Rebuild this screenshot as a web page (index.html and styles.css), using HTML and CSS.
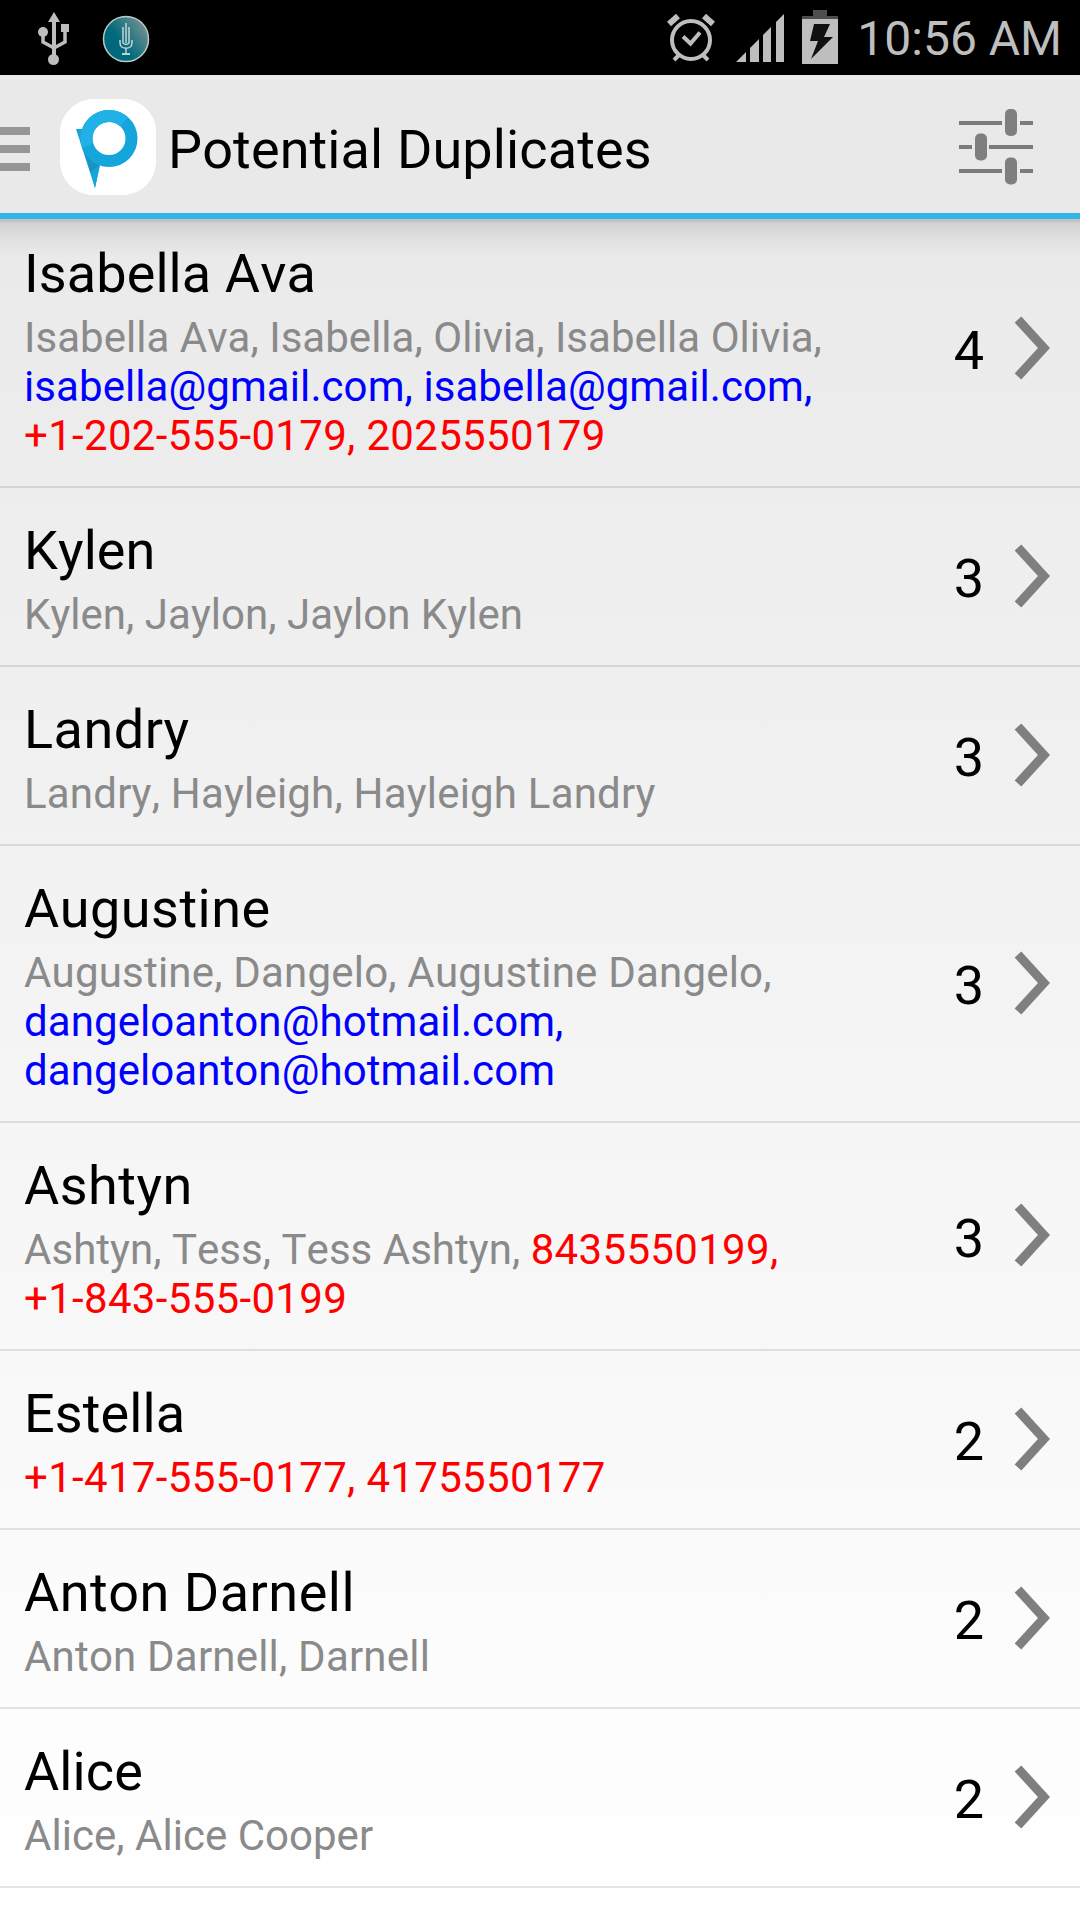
FILE: index.html
```
<!DOCTYPE html>
<html lang="en">

<head>
    <meta charset="UTF-8">
    <meta name="viewport" content="width=device-width, initial-scale=1.0">
    <title>Potential Duplicates</title>
    <link rel="stylesheet" href="styles.css">
</head>

<body>
    <div class="status-bar">
        <svg class="usb-icon" width="32" height="54" viewBox="0 0 32 54">
            <path d="M16 0l6 10h-4v33h-4V10h-4z" />
            <path class="branches" d="M5 20v10l11 6M27 18v12l-11 6" />
            <path d="M23 12h8v8h-8z" />
            <circle cx="5" cy="20" r="5" />
            <circle cx="15.500" cy="47.500" r="5.500" />
        </svg>
        <svg class="mic-icon" width="48" height="48" viewBox="0 0 48 48">
            <defs>
                <linearGradient id="micFill" x1="0.2" y1="0.7" x2="0.9" y2="0.2">
                    <stop offset="0.25" stop-color="#006a7c" />
                    <stop offset="1" stop-color="#6d8e90" />
                </linearGradient>
            </defs>
            <circle cx="24" cy="24" r="22.500" fill="url(#micFill)" stroke="#b9c9ca" stroke-width="1.500" />
            <g fill="none" stroke="#c4d2d3" stroke-width="1.500">
                <path d="M24 8v20M21 12v16q3 3 6 0V12" />
                <path d="M18 25v3c0 7 12 7 12 0v-3M24 33.500v6" />
                <path stroke-width="2" d="M20 39h8" />
            </g>
        </svg>
        <div class="status-right">
            <svg class="alarm-icon" width="48" height="48" viewBox="0 0 48 48">
                <circle cx="24" cy="26" r="19" />
                <path d="M16 22.500l7.500 7 9.500-11" />
                <path class="bells" d="M2 10l9-8M46 10l-9-8" />
                <path d="M12 41l-5 5M36 41l5 5" />
            </svg>
            <svg class="signal-icon" width="48" height="48" viewBox="0 0 48 48">
                <path d="M0 48l10-10v10zM14 48V34l9-9v23zM27 48V21l8-8v35zM40 48V8l8-8v48z" />
            </svg>
            <svg class="battery-icon" width="36" height="54" viewBox="0 0 36 54">
                <path fill="#4d4d4d" d="M11 0h14v6h11v3H0V6h11z" />
                <path fill="#bebebe" d="M0 9h36v45H0z" />
                <path fill="#111" d="M12 14h16l-6 13h9L9 49l7-18H8z" />
            </svg>
            <span class="clock">10:56 AM</span>
        </div>
    </div>

    <header class="action-bar">
        <div class="menu-icon"><i></i><i></i><i></i></div>
        <svg class="app-logo" width="96" height="96" viewBox="0 0 96 96">
            <path fill="#fff" d="M32 0H64C82 1 96 15 96 32V64C95 82 81 95 64 96H32C14 95 1 81 0 64V32C1 15 15 1 32 0z" />
            <path fill="#14a5da" d="M16 30h12l12 35-5 24z" />
            <path fill="#1b93c2" d="M23 50l17 16-9 8z" />
            <path fill="#14a5da" d="M31 73l9-7-5 23z" />
            <circle cx="49" cy="39.500" r="22.500" fill="none" stroke="#14a5da" stroke-width="12" />
            <path fill="none" stroke="#22b1e6" stroke-width="12" d="M27.700 46.700A22.500 22.500 0 0 1 64 22.700" />
        </svg>
        <h1>Potential Duplicates</h1>
        <svg class="filter-icon" width="74" height="78" viewBox="0 0 74 78">
            <path stroke="#7b7b7b" stroke-width="4" d="M0 15h43M61 15h13M0 39h13M30 39h44M0 63h43M61 63h13" />
            <rect x="46" y="1" width="12" height="27" rx="5" />
            <rect x="16" y="25.500" width="12" height="27" rx="5" />
            <rect x="46" y="49.500" width="12" height="27" rx="5" />
        </svg>
    </header>

    <ul class="contact-list">
        <li>
            <div class="contact">
                <h2>Isabella Ava</h2>
                <p>Isabella Ava, Isabella, Olivia, Isabella Olivia,<br><span class="email">isabella@gmail.com, isabella@gmail.com,</span><br><span class="phone">+1-202-555-0179, 2025550179</span></p>
            </div>
            <span class="count">4</span>
            <svg class="chevron" viewBox="0 0 36 64"><path d="M4 3.500L30 32 4 60.500" /></svg>
        </li>
        <li>
            <div class="contact">
                <h2>Kylen</h2>
                <p>Kylen, Jaylon, Jaylon Kylen</p>
            </div>
            <span class="count">3</span>
            <svg class="chevron" viewBox="0 0 36 64"><path d="M4 3.500L30 32 4 60.500" /></svg>
        </li>
        <li>
            <div class="contact">
                <h2 class="wide">Landry</h2>
                <p class="wide">Landry, Hayleigh, Hayleigh Landry</p>
            </div>
            <span class="count">3</span>
            <svg class="chevron" viewBox="0 0 36 64"><path d="M4 3.500L30 32 4 60.500" /></svg>
        </li>
        <li>
            <div class="contact">
                <h2 class="wide">Augustine</h2>
                <p class="wide">Augustine, Dangelo, Augustine Dangelo,<br><span class="email">dangeloanton@hotmail.com,<br>dangeloanton@hotmail.com</span></p>
            </div>
            <span class="count">3</span>
            <svg class="chevron" viewBox="0 0 36 64"><path d="M4 3.500L30 32 4 60.500" /></svg>
        </li>
        <li>
            <div class="contact">
                <h2 class="wide">Ashtyn</h2>
                <p>Ashtyn, Tess, Tess Ashtyn, <span class="phone">8435550199,<br>+1-843-555-0199</span></p>
            </div>
            <span class="count">3</span>
            <svg class="chevron" viewBox="0 0 36 64"><path d="M4 3.500L30 32 4 60.500" /></svg>
        </li>
        <li>
            <div class="contact">
                <h2>Estella</h2>
                <p><span class="phone">+1-417-555-0177, 4175550177</span></p>
            </div>
            <span class="count">2</span>
            <svg class="chevron" viewBox="0 0 36 64"><path d="M4 3.500L30 32 4 60.500" /></svg>
        </li>
        <li>
            <div class="contact">
                <h2 class="wide">Anton Darnell</h2>
                <p class="wide">Anton Darnell, Darnell</p>
            </div>
            <span class="count">2</span>
            <svg class="chevron" viewBox="0 0 36 64"><path d="M4 3.500L30 32 4 60.500" /></svg>
        </li>
        <li>
            <div class="contact">
                <h2>Alice</h2>
                <p>Alice, Alice Cooper</p>
            </div>
            <span class="count">2</span>
            <svg class="chevron" viewBox="0 0 36 64"><path d="M4 3.500L30 32 4 60.500" /></svg>
        </li>
    </ul>
</body>

</html>
```
FILE: styles.css
```
:root {
    --accent-color: #33b5e5;
    --status-color: #bebebe;
    --icon-color: #7f7f7f;
    --muted-color: #8a8a8a;
}

* {
    box-sizing: border-box;
}

body {
    margin: 0;
    height: 1920px;
    overflow: hidden;
    font-family: Roboto, sans-serif;
    font-kerning: none;
    color: #000;
    background: linear-gradient(#e8e8e8 75px, #fff 1900px);
}

h1,
h2,
p {
    margin: 0;
    font-weight: 400;
    white-space: nowrap;
}

svg {
    display: block;
    flex: none;
}

.status-bar {
    display: flex;
    height: 75px;
    padding-left: 38px;
    background-color: #000;
}

.usb-icon {
    margin-top: 12px;
    fill: var(--status-color);
}

.usb-icon .branches {
    fill: none;
    stroke: var(--status-color);
    stroke-width: 3.5;
}

.mic-icon {
    margin: 15px 0 0 32px;
}

.status-right {
    display: flex;
    margin-left: auto;
    padding-right: 18px;
}

.alarm-icon {
    margin-top: 14px;
    fill: none;
    stroke: var(--status-color);
    stroke-width: 4;
}

.alarm-icon .bells {
    stroke-width: 6;
}

.signal-icon {
    margin: 14px 0 0 21px;
    fill: var(--status-color);
}

.battery-icon {
    margin: 10px 0 0 18px;
}

.clock {
    margin-left: 19px;
    font-size: 48px;
    line-height: 78px;
    color: var(--status-color);
}

.action-bar {
    position: relative;
    display: flex;
    align-items: center;
    height: 144px;
    padding-right: 47px;
    border-bottom: 6px solid var(--accent-color);
    background-color: #e9e9e9;
}

/* shadow under the bar, falls over the first row */
.action-bar::after {
    content: "";
    position: absolute;
    top: 144px;
    left: 0;
    width: 100%;
    height: 40px;
    background: linear-gradient(rgba(0, 0, 0, 0.17) 3px, rgba(0, 0, 0, 0.11) 3px, rgba(0, 0, 0, 0.04) 20px, rgba(0, 0, 0, 0));
}

.menu-icon {
    display: grid;
    gap: 10px;
    width: 30px;
    margin: 10px 30px 0 0;
}

.menu-icon i {
    height: 8px;
    background-color: #969696;
}

.app-logo {
    margin-top: 6px;
}

h1 {
    margin: 10px auto 0 12px;
    font-size: 54px;
    line-height: 63px;
    letter-spacing: 0.12px;
}

.filter-icon {
    margin-top: 6px;
    fill: var(--icon-color);
}

.contact-list {
    margin: -8px 0 0;
    padding: 0;
    list-style: none;
}

.contact-list li {
    display: flex;
    align-items: center;
    padding-right: 30px;
    border-bottom: 2px solid rgba(0, 0, 0, 0.1);
}

.contact {
    flex: 1;
    padding: 31px 0 26px 24px;
}

h2 {
    font-size: 54px;
    line-height: 63px;
    letter-spacing: 0.1px;
}

h2.wide {
    letter-spacing: 0.5px;
}

.contact p {
    margin-top: 8px;
    font-size: 42px;
    line-height: 49px;
    letter-spacing: 0.03px;
    color: var(--muted-color);
}

.contact p.wide {
    letter-spacing: 0.2px;
}

.contact .email {
    color: #00f;
    letter-spacing: 0.08px;
}

.contact .phone {
    color: #f00;
    letter-spacing: 0.32px;
}

.count {
    margin: 4px 30px 0 0;
    font-size: 54px;
    line-height: 63px;
}

.chevron {
    width: 36px;
    height: 64px;
    margin-bottom: 2px;
    fill: none;
    stroke: var(--icon-color);
    stroke-width: 9;
}
```
